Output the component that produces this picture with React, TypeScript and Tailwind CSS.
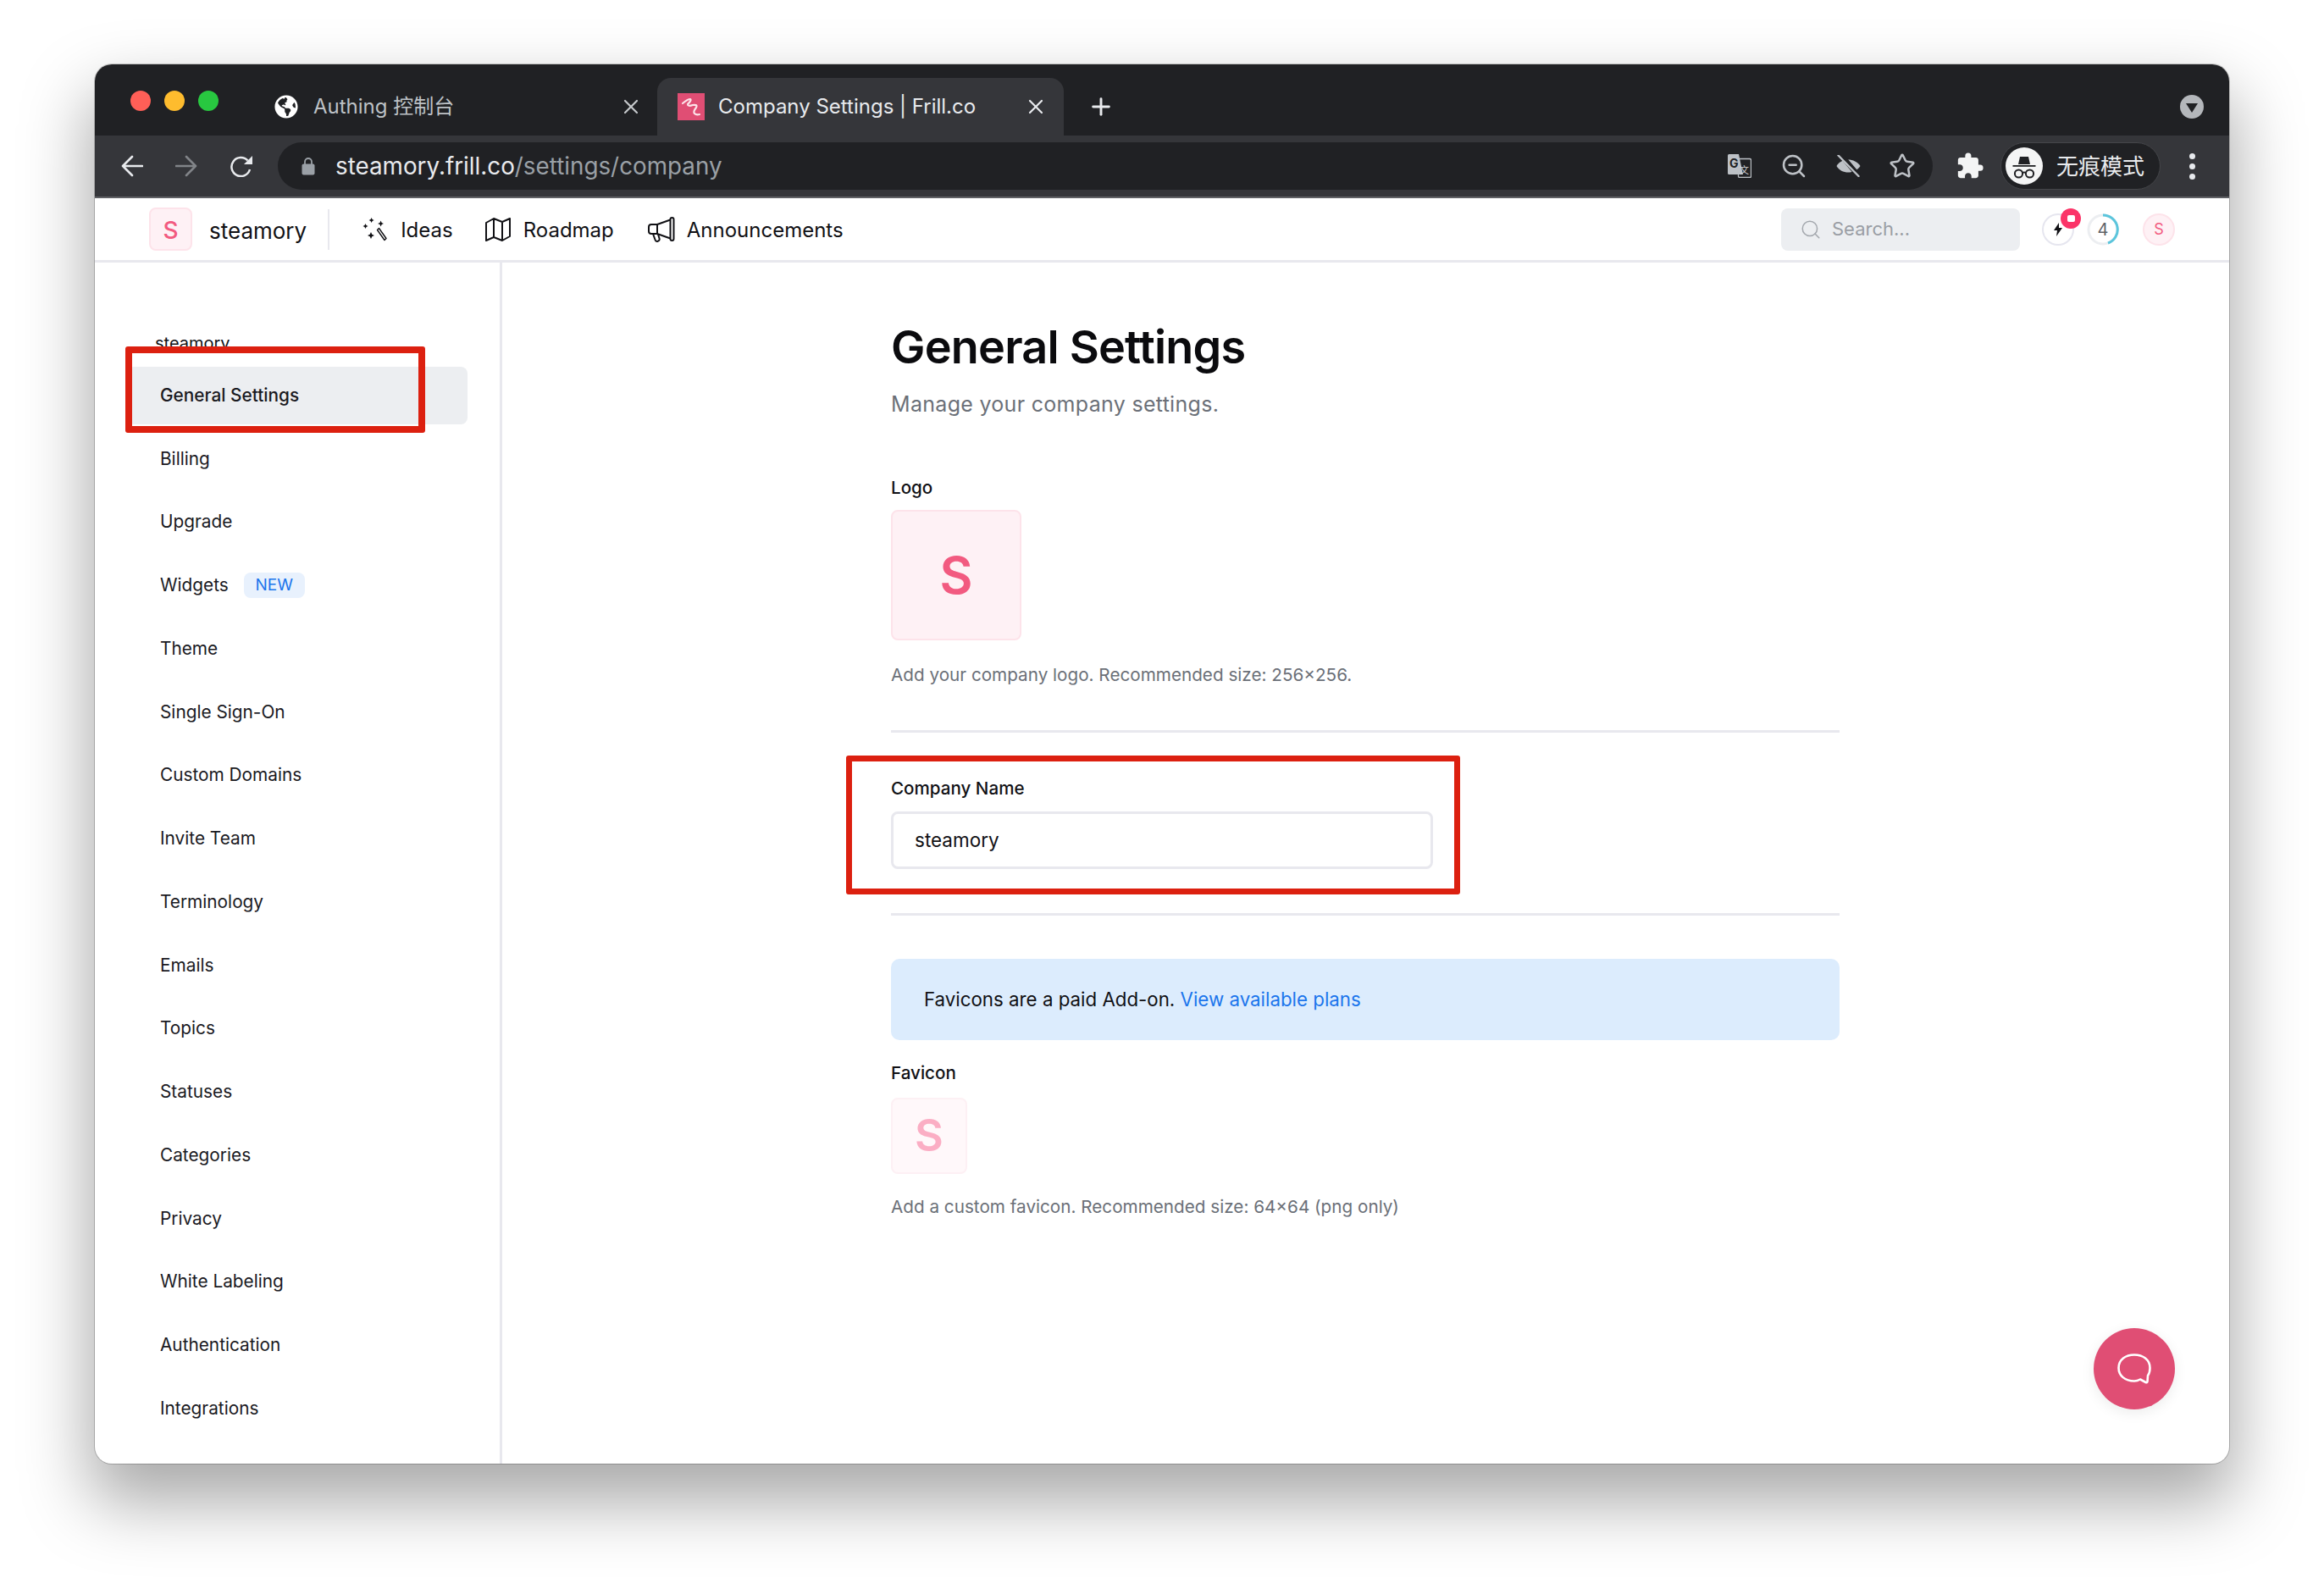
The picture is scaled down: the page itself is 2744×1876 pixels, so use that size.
import React from 'react';
import { Search, ZoomOut, Star, X, Plus } from 'lucide-react';
import { FaGlobeAmericas } from 'react-icons/fa';
import { MdExtension } from 'react-icons/md';

const SIDEBAR_ITEMS = [
  'General Settings',
  'Billing',
  'Upgrade',
  'Widgets',
  'Theme',
  'Single Sign-On',
  'Custom Domains',
  'Invite Team',
  'Terminology',
  'Emails',
  'Topics',
  'Statuses',
  'Categories',
  'Privacy',
  'White Labeling',
  'Authentication',
  'Integrations',
];

const UI_FONT = "font-['Inter','Noto_Sans_CJK_SC',sans-serif]";

function FrillFavicon() {
  return (
    <svg viewBox="0 0 32 32" className="w-8 h-8 shrink-0">
      <rect width="32" height="32" fill="#e04e74" />
      <path d="M6 12 Q12 7 15 7 Q17 8 12 13 Q12 16 18 14 Q24 13 22 17 Q18 22 20 24 Q22 26 26 25" fill="none" stroke="#fde4ea" strokeWidth="2.2" strokeLinecap="round" />
    </svg>
  );
}

function BackArrow({ className }: { className: string }) {
  return (
    <svg viewBox="0 0 26 26" className={`w-[26px] h-[26px] shrink-0 ${className}`}>
      <path d="M25 13 H2 M13 2 L2 13 L13 24" fill="none" stroke="currentColor" strokeWidth="2.6" strokeLinecap="round" strokeLinejoin="round" />
    </svg>
  );
}

function ReloadIcon() {
  return (
    <svg viewBox="0 0 28 26" className="w-[28px] h-[26px] shrink-0 text-[#e8eaed]">
      <path d="M21.5 6.5 A11 11 0 1 0 24 17" fill="none" stroke="currentColor" strokeWidth="2.5" />
      <path d="M27 1 V11 H17 Z" fill="currentColor" />
    </svg>
  );
}

function TranslateIcon() {
  return (
    <svg viewBox="0 0 28 28" className="w-7 h-7 shrink-0">
      <rect x="12.5" y="5.5" width="15" height="22" rx="1.5" fill="#202124" stroke="#bdc1c6" strokeWidth="1.3" />
      <path d="M1.5 0 H13 L18 24 H1.5 A1.5 1.5 0 0 1 0 22.5 V1.5 A1.5 1.5 0 0 1 1.5 0 Z" fill="#bdc1c6" />
      <text x="2" y="16" fontSize="14" fontWeight="700" fill="#202124" fontFamily="Inter, sans-serif">G</text>
      <text x="14" y="23" fontSize="11" fill="#d5d7da" fontFamily="Noto Sans CJK SC, sans-serif">文</text>
    </svg>
  );
}

function EyeBlocked() {
  return (
    <svg viewBox="0 0 29 26" className="w-[29px] h-[26px] shrink-0">
      <path d="M0.5 13 C6 3 22 3 28.5 13 C22 23 6 23 0.5 13 Z" fill="#bdc1c6" />
      <path d="M5 -1 L26 24" stroke="#202124" strokeWidth="6" />
      <path d="M2.5 0.5 L26.5 25" stroke="#bdc1c6" strokeWidth="2.4" strokeLinecap="round" />
    </svg>
  );
}

function IncognitoIcon() {
  return (
    <svg viewBox="0 0 44 44" className="w-11 h-11 shrink-0">
      <circle cx="22" cy="22" r="22" fill="#f4f5f5" />
      <path d="M15 20 L17 11 H27 L29 20 Z" fill="#202124" />
      <rect x="8.5" y="21" width="27" height="1.8" fill="#202124" />
      <circle cx="15.5" cy="31" r="4.6" fill="none" stroke="#202124" strokeWidth="2" />
      <circle cx="28.5" cy="31" r="4.6" fill="none" stroke="#202124" strokeWidth="2" />
      <path d="M20 30 Q22 29 24 30" fill="none" stroke="#202124" strokeWidth="1.8" />
    </svg>
  );
}

function WandIcon() {
  return (
    <svg viewBox="0 0 30 28" className="w-[30px] h-[28px] shrink-0 text-[#111115]">
      <path d="M10.6 0 L11.6 2 L13.6 3 L11.6 4 L10.6 6 L9.6 4 L7.6 3 L9.6 2 Z" fill="currentColor" />
      <path d="M3.5 7 L4.5 9 L6.5 10 L4.5 11 L3.5 13 L2.5 11 L0.5 10 L2.5 9 Z" fill="currentColor" />
      <path d="M21.6 3.5 L22.7 6 L25 7 L22.7 8 L21.6 10.5 L20.5 8 L18 7 L20.5 6 Z" fill="currentColor" />
      <path d="M10 17 L11.3 19.7 L14 21 L11.3 22.3 L10 25 L8.7 22.3 L6 21 L8.7 19.7 Z" fill="currentColor" />
      <path d="M17.5 14.5 L19.5 12.5 L28 24.5 L26 26.5 Z" fill="none" stroke="currentColor" strokeWidth="1.4" strokeLinejoin="round" />
    </svg>
  );
}

function MapIcon() {
  return (
    <svg viewBox="0 0 30 28" className="w-[30px] h-[28px] shrink-0 text-[#111115]">
      <path d="M1 6 L10 1 L20 5 L29 1 V22 L20 27 L10 23 L1 27 Z M10 1 V23 M20 5 V27" fill="none" stroke="currentColor" strokeWidth="2" strokeLinejoin="round" />
    </svg>
  );
}

function MegaphoneIcon() {
  return (
    <svg viewBox="0 0 32 30" className="w-8 h-[30px] shrink-0 text-[#111115]">
      <path d="M26.5 3.5 L11 9 H4 A3 3 0 0 0 1 12 V17 A3 3 0 0 0 4 20 H11 L26.5 25.5" fill="none" stroke="currentColor" strokeWidth="2" strokeLinejoin="round" />
      <rect x="26.5" y="1" width="4" height="27" rx="2" fill="none" stroke="currentColor" strokeWidth="2" />
      <path d="M11 9 V20 M6 20 L8.5 27 A2.6 2.6 0 0 0 13.5 25.5 L12 20.5" fill="none" stroke="currentColor" strokeWidth="2" strokeLinejoin="round" />
    </svg>
  );
}

function TabStrip() {
  return (
    <div className="h-[84px] bg-[#202124] flex items-end shrink-0">
      <div className="self-start mt-[31px] ml-[42px] flex gap-[16px]">
        <div className="w-6 h-6 rounded-full bg-[#ff5f57]" />
        <div className="w-6 h-6 rounded-full bg-[#febc2e]" />
        <div className="w-6 h-6 rounded-full bg-[#28c840]" />
      </div>
      <div className="ml-[52px] w-[466px] h-[68px] flex items-center pl-[14px] pr-[17px]">
        <FaGlobeAmericas className="w-7 h-7 text-white shrink-0" />
        <span className="ml-[18px] text-[24px] text-[#bdc1c6]">Authing 控制台</span>
        <X className="ml-auto w-[28px] h-[28px] text-[#c4c7ca]" strokeWidth={1.9} />
      </div>
      <div className="w-[480px] h-[68px] bg-[#35363a] rounded-t-[16px] flex items-center pl-[24px] pr-[19px]">
        <FrillFavicon />
        <span className="ml-[16px] text-[24px] text-[#e8eaed]">Company Settings | Frill.co</span>
        <X className="ml-auto w-[28px] h-[28px] text-[#e8eaed]" strokeWidth={1.9} />
      </div>
      <div className="h-[68px] flex items-center ml-[28px]">
        <Plus className="w-8 h-8 text-[#e8eaed]" strokeWidth={2.2} />
      </div>
      <div className="ml-auto mr-[30px] h-[68px] flex items-center">
        <div className="w-7 h-7 rounded-full bg-[#b4b7bb] flex items-center justify-center">
          <div className="w-0 h-0 border-l-[7px] border-r-[7px] border-t-[11px] border-l-transparent border-r-transparent border-t-[#202124] mt-[2px]" />
        </div>
      </div>
    </div>
  );
}

function Toolbar() {
  return (
    <div className="h-[74px] bg-[#35363a] border-b-2 border-[#5f6064] flex items-center pl-[31px] shrink-0">
      <BackArrow className="text-[#e8eaed]" />
      <BackArrow className="ml-[38px] text-[#818488] -scale-x-100" />
      <div className="ml-[38px]">
        <ReloadIcon />
      </div>
      <div className="ml-[29px] w-[1954px] h-[56px] rounded-full bg-[#202124] flex items-center pl-[28px] pr-[20px] shrink-0">
        <svg viewBox="0 0 16 22" className="w-4 h-[22px] shrink-0">
          <path d="M4 9 V6 a4 4 0 0 1 8 0 V9" fill="none" stroke="#9aa0a6" strokeWidth="1.8" />
          <rect x="0.5" y="8.5" width="15" height="13" rx="2" fill="#9aa0a6" />
        </svg>
        <span className="ml-[24px] mt-[2px] text-[27.8px] text-[#e8eaed]">
          steamory.frill.co<span className="text-[#9aa0a6]">/settings/company</span>
        </span>
        <div className="ml-auto flex items-center gap-[34px]">
          <TranslateIcon />
          <ZoomOut className="w-8 h-8 text-[#bdc1c6]" strokeWidth={1.9} />
          <EyeBlocked />
          <Star className="w-8 h-8 -ml-[1px] text-[#bdc1c6]" strokeWidth={1.9} />
        </div>
      </div>
      <MdExtension className="ml-[27px] w-[34px] h-[34px] text-[#f4f5f5] shrink-0" />
      <div className="ml-[19px] w-[189px] h-[56px] rounded-full bg-[#202124] border border-[#45464a] flex items-center pl-[5px] shrink-0">
        <IncognitoIcon />
        <span className="ml-[16px] text-[26px] text-[#e8eaed]">无痕模式</span>
      </div>
      <div className="ml-[34px] flex flex-col gap-[5px]">
        <div className="w-[7px] h-[7px] rounded-full bg-[#e8eaed]" />
        <div className="w-[7px] h-[7px] rounded-full bg-[#e8eaed]" />
        <div className="w-[7px] h-[7px] rounded-full bg-[#e8eaed]" />
      </div>
    </div>
  );
}

function TopNav() {
  return (
    <div className="h-[76px] bg-white border-b-[3px] border-[#e8e8ee] flex items-center pl-[64px] shrink-0">
      <div className="w-[51px] h-[51px] rounded-[8px] bg-[#fef1f5] border-2 border-[#fde3ea] flex items-center justify-center pt-[2px] text-[28px] font-medium text-[#f25a80]">S</div>
      <span className="ml-[20px] mt-[3px] text-[26px] font-normal text-[#111115]">steamory</span>
      <div className="ml-[25px] w-[2px] h-[48px] bg-[#e8e8ee]" />
      <div className="ml-[39px]">
        <WandIcon />
      </div>
      <span className="ml-[15px] mt-[2px] text-[24px] font-normal text-[#111115]">Ideas</span>
      <div className="ml-[38px]">
        <MapIcon />
      </div>
      <span className="ml-[15px] mt-[2px] text-[24px] font-normal text-[#111115]">Roadmap</span>
      <div className="ml-[40px]">
        <MegaphoneIcon />
      </div>
      <span className="ml-[14px] mt-[2px] text-[24px] font-normal text-[#111115]">Announcements</span>

      <div className="ml-auto w-[282px] h-[50px] rounded-[8px] bg-[#eceef1] flex items-center pl-[22px]">
        <Search className="w-[26px] h-[26px] text-[#a3a7ad]" strokeWidth={1.4} />
        <span className="ml-[12px] text-[22px] text-[#9a9ea5]">Search...</span>
      </div>
      <div className="ml-[26px] relative w-[38px] h-[38px] rounded-full border-2 border-[#e6e6ef] flex items-center justify-center">
        <svg viewBox="0 0 10 16" className="w-[10px] h-[16px]">
          <path d="M6 0 L0 9 H4 L3 16 L10 6 H6 Z" fill="#111115" />
        </svg>
        <div className="absolute -top-[8px] -right-[10px] w-6 h-6 rounded-full bg-[#fb3468] flex items-center justify-center">
          <div className="w-[9px] h-[8px] rounded-[2px] bg-white" />
        </div>
      </div>
      <div className="ml-[15px] relative w-[38px] h-[38px] flex items-center justify-center text-[20px] text-[#5f6369]">
        <svg viewBox="0 0 38 38" className="absolute inset-0 w-[38px] h-[38px]">
          <circle cx="19" cy="19" r="17" fill="none" stroke="#eceef1" strokeWidth="3" />
          <path d="M19 2 A17 17 0 0 1 25 35" fill="none" stroke="#5bc5dc" strokeWidth="3" />
        </svg>
        4
      </div>
      <div className="ml-[28px] mr-[64px] w-[38px] h-[38px] rounded-full bg-[#fef1f5] border-2 border-[#fde3ea] flex items-center justify-center text-[18px] text-[#f25a80]">S</div>
    </div>
  );
}

function Sidebar() {
  return (
    <div className="w-[481px] shrink-0 border-r-[3px] border-[#e8e8ee] pl-[38px] pt-[80px] overflow-hidden">
      <div className="pl-[33px] text-[20px] leading-[30px] text-[#111115]">steamory</div>
      <div className="mt-[12.5px] w-[402px] flex flex-col gap-[6.75px]">
        {SIDEBAR_ITEMS.map((item, index) => (
          <div
            key={item}
            className={`h-[68px] shrink-0 rounded-[8px] pl-[39px] flex items-center text-[20.8px] text-[#1a1a1f] ${index === 0 ? 'bg-[#eceef1] font-medium' : ''}`}
          >
            {item}
            {item === 'Widgets' && (
              <span className="ml-[18px] w-[72px] h-[30px] rounded-[8px] bg-[#e8f1fd] flex items-center justify-center text-[19px] text-[#1b75ec]">NEW</span>
            )}
          </div>
        ))}
      </div>
    </div>
  );
}

function MainPanel() {
  return (
    <div className="flex-1 pl-[459px] pt-[70px]">
      <div className="w-[1120px]">
        <h1 className="text-[54px] leading-[60px] font-semibold tracking-[-0.8px] text-[#0b0b0e]">General Settings</h1>
        <p className="mt-[21px] text-[25px] leading-[32px] tracking-[0.3px] text-[#6b7078]">Manage your company settings.</p>

        <div className="mt-[68px] text-[20.6px] leading-[30px] font-medium text-[#111115]">Logo</div>
        <div className="mt-[11px] w-[154px] h-[154px] rounded-[8px] bg-[#fef1f5] border-2 border-[#fde3ea] flex items-center justify-center text-[60px] font-semibold text-[#f25a80]">S</div>
        <p className="mt-[26px] text-[20.7px] leading-[30px] text-[#6b7078]">Add your company logo. Recommended size: 256×256.</p>

        <div className="mt-[50px] h-[3px] bg-[#e8e8ee]" />

        <div className="mt-[51px] text-[20.6px] leading-[30px] font-medium text-[#111115]">Company Name</div>
        <div className="mt-[12px] w-[640px] h-[68px] rounded-[8px] border-[3px] border-[#e8e8ee] flex items-center pl-[25px] text-[22.5px] text-[#111115]">steamory</div>

        <div className="mt-[52px] h-[3px] bg-[#e8e8ee]" />

        <div className="mt-[51px] h-[96px] rounded-[10px] bg-[#dcecfd] flex items-center pl-[39px] text-[22.3px] text-[#111115]">
          Favicons are a paid Add-on.&nbsp;<span className="text-[#1b75ec]">View available plans</span>
        </div>

        <div className="mt-[24px] text-[20.6px] leading-[30px] font-medium text-[#111115]">Favicon</div>
        <div className="mt-[14px] w-[90px] h-[90px] rounded-[8px] bg-[#fff8fa] border-2 border-[#fdf0f4] flex items-center justify-center text-[52px] font-semibold text-[#fbaec4]">S</div>
        <p className="mt-[24px] text-[20.7px] leading-[30px] text-[#6b7078]">Add a custom favicon. Recommended size: 64×64 (png only)</p>
      </div>
    </div>
  );
}

export default function App() {
  return (
    <div className={`h-screen bg-white pt-[76px] pl-[112px] overflow-hidden ${UI_FONT}`}>
      <div className="relative w-[2520px] h-[1652px] rounded-[20px] bg-white flex flex-col overflow-visible shadow-[0_0_0_1px_rgba(0,0,0,0.2),0_40px_80px_6px_rgba(0,0,0,0.34)]">
        <div className="rounded-t-[20px] overflow-hidden shrink-0">
          <TabStrip />
          <Toolbar />
        </div>
        <TopNav />
        <div className="flex-1 flex min-h-0 rounded-b-[20px] overflow-hidden">
          <Sidebar />
          <MainPanel />
        </div>

        {/* Annotation boxes drawn over the shot */}
        <div className="absolute left-[36px] top-[333px] w-[354px] h-[102px] border-[8px] border-[#dc2010] rounded-[3px]" />
        <div className="absolute left-[887px] top-[816px] w-[725px] h-[164px] border-[7px] border-[#dc2010] rounded-[3px]" />

        <div className="absolute left-[2360px] top-[1492px] w-24 h-24 rounded-full bg-[#e04e74] shadow-[0_4px_16px_rgba(0,0,0,0.08)] flex items-center justify-center">
          <svg viewBox="0 0 40 36" className="w-10 h-9">
            <path d="M20 1.5 C30 1.5 38.5 7 38.5 17 C38.5 21 37.5 24 36 26 L35.5 33 C35.5 34 34.5 34.5 33.5 34 L27 30.5 C24.5 32 22 32.5 20 32.5 C9 32.5 1.5 26 1.5 17 C1.5 7 10 1.5 20 1.5 Z" fill="none" stroke="#fff" strokeWidth="2.6" strokeLinejoin="round" />
          </svg>
        </div>
      </div>
    </div>
  );
}
